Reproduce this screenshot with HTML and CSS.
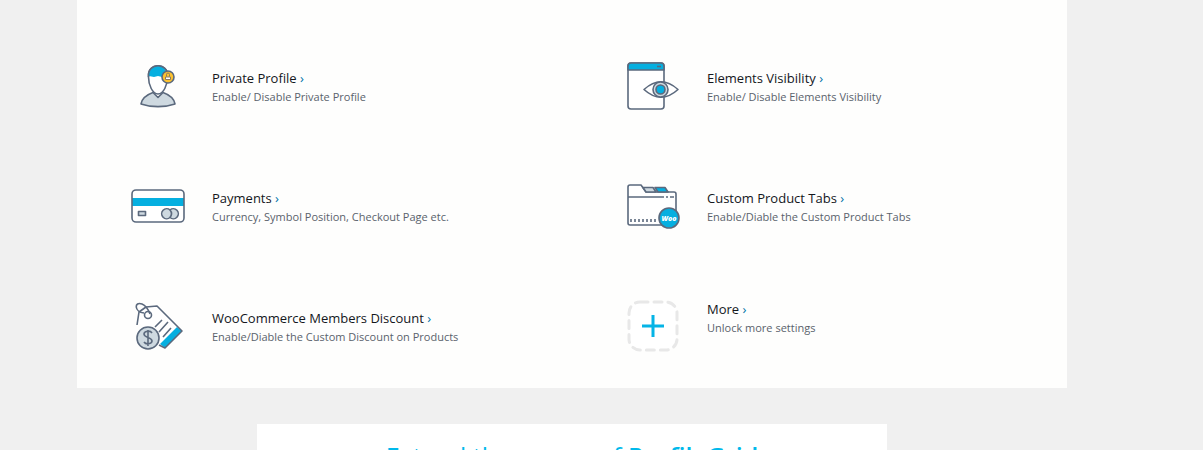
FILE: index.html
```html
<!DOCTYPE html>
<html lang="en">
<head>
<meta charset="utf-8">
<title>Settings</title>
<link rel="stylesheet" href="styles.css">
</head>
<body>
<main class="content">
  <section class="panel">
    <a class="setting" href="#private-profile">
      <svg class="icon" viewBox="0 0 54 54" aria-hidden="true">
        <path class="pale line" d="M10 44C11 38 15 35 22 32.500l5 5 5-5C39 35 43 38 44 44 34 47.500 20 47.500 10 44Z"/>
        <path class="white line" d="M17.500 17C16 2 38 2 36.500 17c0 8-4 17-9.500 17s-9.500-9-9.500-17Z"/>
        <path class="blue" d="M18 16C17 3 36 2 36 16l-5 1-4-1-4 1Z"/>
        <path class="line" d="M17.500 17C16 2 38 2 36.500 17"/>
        <circle class="gold line" cx="37" cy="17" r="6"/>
        <path class="thin" d="M35.500 16.500v-2a1.500 1.500 0 0 1 3 0v2"/>
        <path class="lock" d="M34.500 17h5v2.500h-5z"/>
      </svg>
      <span class="text"><span class="title">Private Profile <span class="arrow">›</span></span><span class="note">Enable/ Disable Private Profile</span></span>
    </a>
    <a class="setting" href="#elements-visibility">
      <svg class="icon" viewBox="0 0 54 54" aria-hidden="true">
        <rect class="white line" x="2" y="3" width="36" height="46" rx="3"/>
        <path class="blue line" d="M2 10V6a3 3 0 0 1 3-3h30a3 3 0 0 1 3 3v4Z"/>
        <path class="line" d="M31 6.500h4"/>
        <path class="white line" d="M18 29.500Q35 14 52 29.500 35 45 18 29.500Z"/>
        <circle class="pale line" cx="34.500" cy="29.500" r="7.500"/><circle class="blue line" cx="34.500" cy="29.500" r="4.500"/>
      </svg>
      <span class="text"><span class="title">Elements Visibility <span class="arrow">›</span></span><span class="note">Enable/ Disable Elements Visibility</span></span>
    </a>
    <a class="setting" href="#payments">
      <svg class="icon" viewBox="0 0 54 54" aria-hidden="true">
        <rect class="white" x="1" y="10" width="52" height="32" rx="4"/>
        <path class="blue" d="M1 18h52v8H1z"/>
        <rect class="line" x="1" y="10" width="52" height="32" rx="4"/>
        <rect class="pale line" x="7.500" y="31.500" width="7" height="4"/>
        <path class="pale line" d="M39 30a5 5 0 1 0 0 7.500A5 5 0 1 0 39 30Z"/>
        <path class="line" d="M39 30q3 3.500 0 7.500"/>
      </svg>
      <span class="text"><span class="title">Payments <span class="arrow">›</span></span><span class="note">Currency, Symbol Position, Checkout Page etc.</span></span>
    </a>
    <a class="setting" href="#product-tabs">
      <svg class="icon" viewBox="0 0 54 54" aria-hidden="true">
        <path class="white line" d="M2 43V7q0-2 2-2h11l5 7h28q2 0 2 2v29q0 2-2 2H4q-2 0-2-2Z"/>
        <path class="pale line" d="M17 7.500h10l3 4.500H20Z"/><path class="blue line" d="M29 7.500h10l3 4.500H32Z"/>
        <path class="line" d="M2 17h36m2 0h2m2 0h4"/>
        <path class="line" d="M5 39v3m4-3v3m4-3v3m4-3v3m4-3v3m4-3v3m4-3v3"/>
        <circle class="blue line" cx="43" cy="38" r="10"/>
        <text class="badge" x="43" y="41" text-anchor="middle">Woo</text>
      </svg>
      <span class="text"><span class="title">Custom Product Tabs <span class="arrow">›</span></span><span class="note">Enable/Diable the Custom Product Tabs</span></span>
    </a>
    <a class="setting" href="#members-discount">
      <svg class="icon" viewBox="0 0 54 54" aria-hidden="true">
        <path class="white" d="M7 22 8 12l6-5h11l25 24-18 17Z"/>
        <path class="blue" d="m46 27 5 4-17 17-5-4Z"/>
        <path class="line" d="M6 25 8 12l7-5 11-1 25 25-17 17-6-3"/>
        <circle class="line" cx="17" cy="15" r="3.500"/>
        <path class="line" d="M13 13C3 12 3 1 11 4q5 2 8 10"/>
        <path class="line" d="m24 27 7-7m-3 12 9-10m-5 15 8-9"/>
        <circle class="pale line" cx="17" cy="38" r="11"/>
        <path class="line" d="M21 33c-2-3-8-2-8 1 0 4 8 3 8 7 0 3-6 4-8 1m4-12v16"/>
      </svg>
      <span class="text"><span class="title">WooCommerce Members Discount <span class="arrow">›</span></span><span class="note">Enable/Diable the Custom Discount on Products</span></span>
    </a>
    <a class="setting" href="#more">
      <svg class="icon" viewBox="0 0 54 54" aria-hidden="true">
        <rect class="dashed" x="3" y="2" width="48" height="48" rx="11"/>
        <path class="plus" d="M27 15v22m-11-11h22"/>
      </svg>
      <span class="text more"><span class="title">More <span class="arrow">›</span></span><span class="note">Unlock more settings</span></span>
    </a>
  </section>
  <section class="promo">
    <h2 class="headline">Extend the power of <b>ProfileGrid</b></h2>
  </section>
</main>
</body>
</html>
```
FILE: styles.css
```css
body {
  margin: 0;
  background: #f0f0f0;
  font-family: "Open Sans", "Noto Sans", sans-serif;
}
.content {
  display: flex;
  flex-direction: column;
  align-items: center;
  gap: 36px;
  padding: 0 59px 0 0;
}
.panel {
  display: grid;
  grid-template-columns: 1fr 1fr;
  width: 100%;
  max-width: 990px;
  padding: 27px 0 1px;
  background: #fefefd;
}
.setting {
  display: flex;
  align-items: center;
  gap: 27px;
  min-height: 120px;
  padding-left: 54px;
  box-sizing: border-box;
  color: #14171c;
  text-decoration: none;
}
.icon {
  flex: none;
  width: 54px;
  height: 54px;
}
.text {
  display: flex;
  flex-direction: column;
}
.more {
  padding-bottom: 18px;
}
.title {
  font-size: 13px;
  line-height: 20px;
}
.note {
  font-size: 11px;
  line-height: 18px;
  color: #5a626c;
}
.arrow {
  color: #0073aa;
}
.line, .thin {
  fill: none;
  stroke: #5b697d;
  stroke-width: 1.6;
  stroke-linejoin: round;
}
.thin {
  stroke: #8d7b60;
  stroke-width: 1;
}
.white { fill: #fff; }
.pale { fill: #ced9e0; }
.blue { fill: #05afe0; }
.gold { fill: #fcc22f; }
.lock { fill: #fff; stroke: #8d7b60; stroke-width: 1; }
.badge {
  fill: #fff;
  font-size: 7px;
  font-style: italic;
  font-weight: 800;
}
.dashed {
  fill: #fff;
  stroke: #e8e8e8;
  stroke-width: 3;
  stroke-linecap: round;
  stroke-dasharray: 8 6;
}
.plus {
  fill: none;
  stroke: #05b4e6;
  stroke-width: 3;
}
.promo {
  width: 100%;
  max-width: 630px;
  background: #fff;
}
.headline {
  margin: 0;
  padding: 12px 20px 24px;
  color: #00b9eb;
  font-size: 25px;
  font-weight: 400;
  line-height: 40px;
  text-align: center;
}
.headline b {
  font-weight: 600;
}
```
